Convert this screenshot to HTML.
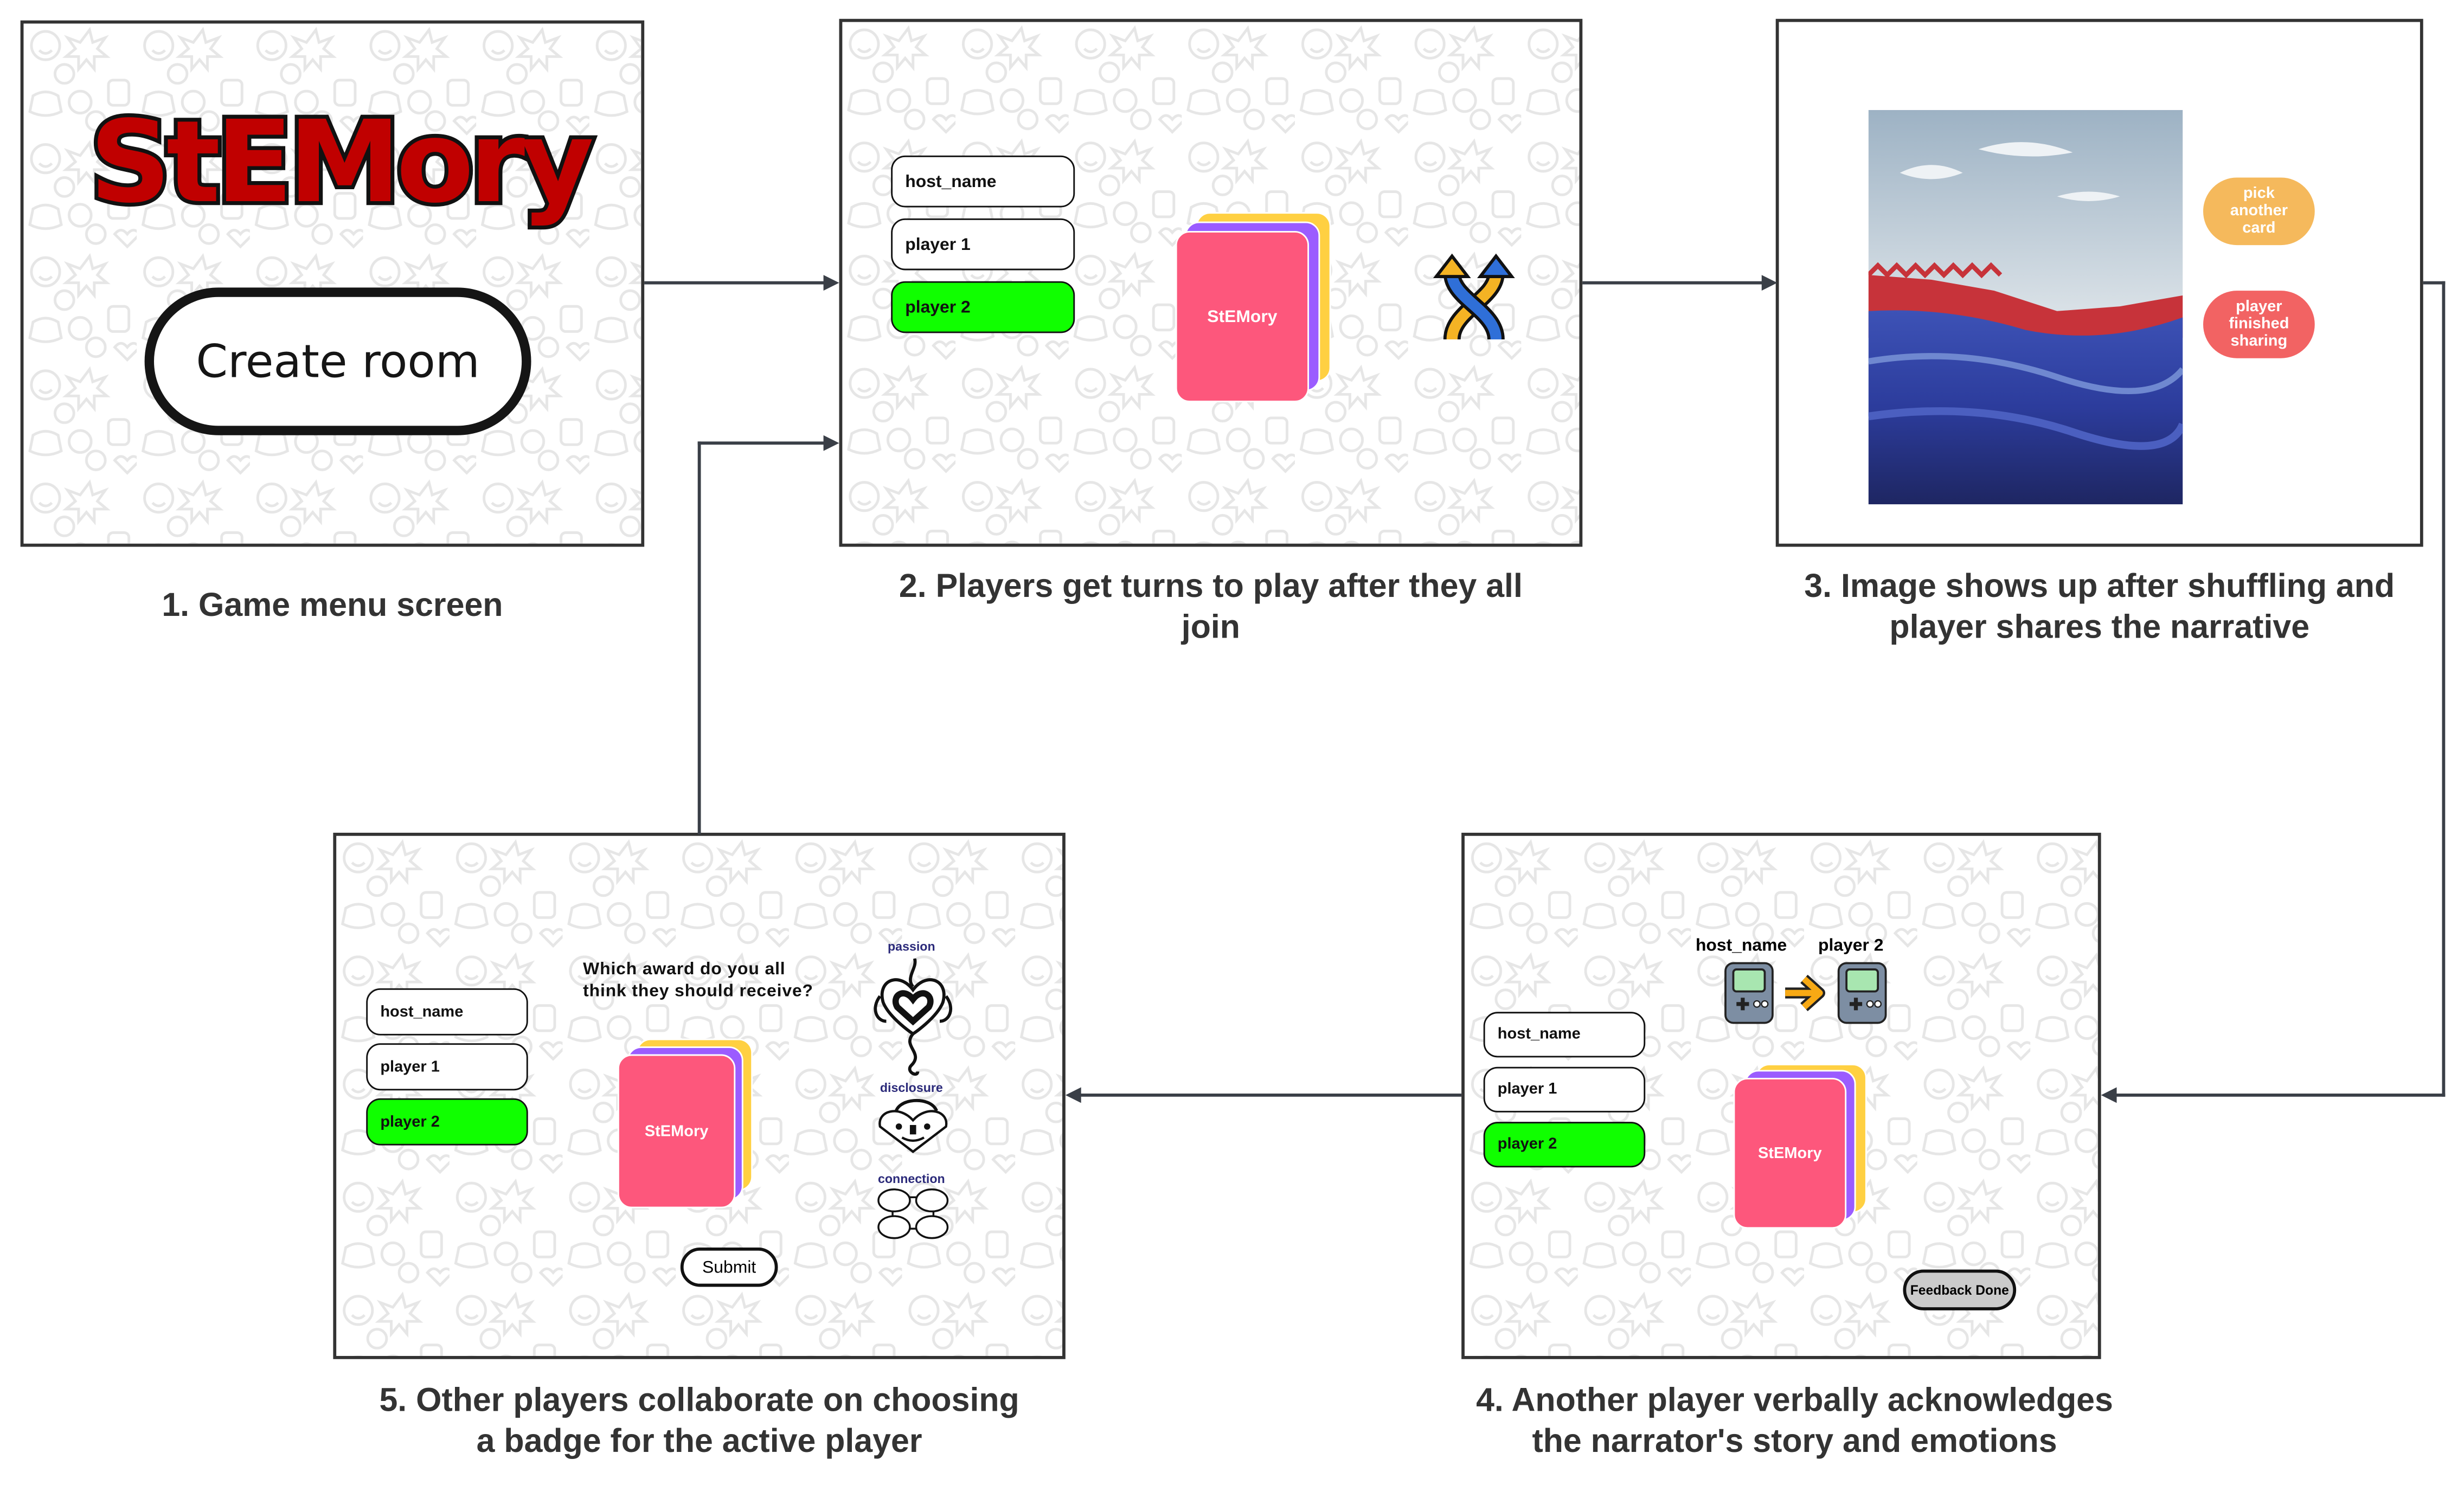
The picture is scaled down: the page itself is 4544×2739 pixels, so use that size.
<!DOCTYPE html>
<html><head><meta charset="utf-8"><style>
html,body{margin:0;padding:0;background:#fff;width:4544px;height:2738px;overflow:hidden}
#w{position:absolute;left:0;top:0;width:1568px;height:945px;transform:scale(2.898);transform-origin:0 0;font-family:"Liberation Sans",sans-serif}
.a{position:absolute}
.box{position:absolute;border:2px solid #333;box-sizing:border-box;overflow:hidden;background:#fff}
.pat{position:absolute;left:0;top:0;width:100%;height:100%}
.cap{position:absolute;text-align:center;font-weight:bold;color:#333;font-size:21px;line-height:26px}
.inp{position:absolute;border:1.5px solid #111;border-radius:9px;background:#fff;box-sizing:border-box;font-weight:bold;font-size:11px;padding-left:8px;display:flex;align-items:center;color:#111}
.g{background:#10ff00}
.card{position:absolute;border-radius:9px;border:1.5px solid #fff;box-sizing:border-box}
.ct{color:#fff;font-weight:bold;font-size:11px;display:flex;align-items:center;justify-content:center}
.ln{position:absolute;background:#3a3f47}
.pill{position:absolute;border-radius:22px;color:#fff;font-weight:bold;font-size:10px;line-height:11px;text-align:center;display:flex;align-items:center;justify-content:center}
</style></head><body><div id="w">
<svg width="0" height="0" style="position:absolute"><defs>
<pattern id="p" width="72" height="72" patternUnits="userSpaceOnUse">
<g fill="none" stroke="#e6e6e6" stroke-width="1.7">
<circle cx="14" cy="14" r="9"/><path d="M10 17q4 4 8 0"/>
<path d="M42 4l2 8 8-3-5 7 6 5-8 0 0 8-5-6-5 6 0-8-8 0 6-5-5-7 8 3z"/>
<rect x="54" y="36" width="13" height="16" rx="3"/>
<path d="M6 46q8-5 16 0l2 10q-10 5-20 0z"/>
<circle cx="36" cy="50" r="7"/><circle cx="46" cy="62" r="6"/>
<path d="M58 62q4-5 8 0q4-5 8 0l-8 8z"/>
<circle cx="26" cy="32" r="6"/>
</g></pattern></defs></svg>

<!-- Box 1 -->
<div class="box" style="left:13px;top:13px;width:397px;height:335px">
<svg class="pat"><rect width="100%" height="100%" fill="url(#p)"/></svg>
<div class="a" style="left:42px;top:48px;width:340px;font-size:72px;font-weight:900;font-family:'DejaVu Sans','Liberation Sans',sans-serif;color:#c00000;-webkit-text-stroke:5px #111;paint-order:stroke fill;letter-spacing:-3px;line-height:80px">StEMory</div>
<div class="a" style="left:77px;top:168px;width:246px;height:94px;border:6px solid #151515;border-radius:50px;background:#fff;box-sizing:border-box;display:flex;align-items:center;justify-content:center;font-size:29px;color:#151515;font-family:'DejaVu Sans',sans-serif">Create room</div>
</div>
<div class="cap" style="left:13px;top:373px;width:397px">1. Game menu screen</div>

<!-- Box 2 -->
<div class="box" style="left:534px;top:12px;width:473px;height:336px">
<svg class="pat"><rect width="100%" height="100%" fill="url(#p)"/></svg>
<div class="inp" style="left:31px;top:85px;width:117px;height:33px">host_name</div>
<div class="inp" style="left:31px;top:125px;width:117px;height:33px">player 1</div>
<div class="inp g" style="left:31px;top:165px;width:117px;height:33px">player 2</div>
<div class="card" style="left:225px;top:121px;width:86px;height:108px;background:#ffd042"></div>
<div class="card" style="left:218px;top:127px;width:86px;height:108px;background:#9b5cff"></div>
<div class="card ct" style="left:212px;top:133px;width:85px;height:109px;background:#fd577c">StEMory</div>
<svg class="a" style="left:376px;top:146px" width="54" height="60" viewBox="0 0 54 60">
<path d="M12 56 C12 38 40 30 40 14" stroke="#111" stroke-width="11" fill="none"/><path d="M12 56 C12 38 40 30 40 14" stroke="#f4b324" stroke-width="7" fill="none"/>
<path d="M40 56 C40 38 12 30 12 14" stroke="#111" stroke-width="11" fill="none"/><path d="M40 56 C40 38 12 30 12 14" stroke="#2f6fd8" stroke-width="7" fill="none"/>
<path d="M2 16 L12 3 L22 16z" fill="#f4b324" stroke="#111" stroke-width="2"/><path d="M30 16 L40 3 L50 16z" fill="#2f6fd8" stroke="#111" stroke-width="2"/>
</svg>
</div>
<div class="cap" style="left:534px;top:361px;width:473px">2. Players get turns to play after they all<br>join</div>

<!-- Box 3 -->
<div class="box" style="left:1130px;top:12px;width:412px;height:336px">
<svg class="a" style="left:57px;top:56px" width="200" height="251" viewBox="0 0 200 251">
<defs><linearGradient id="sky" x1="0" y1="0" x2="0" y2="1"><stop offset="0" stop-color="#9db2c4"/><stop offset=".5" stop-color="#d8e0e6"/><stop offset="1" stop-color="#e6eaee"/></linearGradient>
<linearGradient id="sea" x1="0" y1="0" x2="0" y2="1"><stop offset="0" stop-color="#3d52b6"/><stop offset=".5" stop-color="#2c3c9c"/><stop offset="1" stop-color="#1e2662"/></linearGradient></defs>
<rect width="200" height="251" fill="url(#sky)"/>
<path d="M20 40q20-10 40 0q-20 8-40 0zM70 25q30-10 60 2q-30 6-60-2zM120 55q20-6 40 0q-20 6-40 0z" fill="#eef2f5"/>
<path d="M0 105 L40 108 L80 115 L120 128 L160 125 L200 118 L200 145 L0 145z" fill="#c7333a"/>
<path d="M0 105 l6-6 6 6 6-6 6 6 6-6 6 6 6-6 6 6 6-6 6 6 6-6 6 6 6-6 6 6" stroke="#c7333a" stroke-width="3" fill="none"/>
<path d="M0 128 Q50 125 100 140 Q150 150 200 132 L200 251 L0 251z" fill="url(#sea)"/>
<path d="M0 160 Q60 150 120 170 T200 165" stroke="#6f88d0" stroke-width="4" fill="none"/>
<path d="M0 195 Q70 185 130 205 T200 200" stroke="#4b5fc0" stroke-width="5" fill="none"/>
</svg>
<div class="pill" style="left:270px;top:99px;width:71px;height:43px;background:#f5b95c">pick<br>another<br>card</div>
<div class="pill" style="left:270px;top:171px;width:71px;height:43px;background:#f26363">player<br>finished<br>sharing</div>
</div>
<div class="cap" style="left:1130px;top:361px;width:412px">3. Image shows up after shuffling and<br>player shares the narrative</div>

<!-- Box 5 -->
<div class="box" style="left:212px;top:530px;width:466px;height:335px">
<svg class="pat"><rect width="100%" height="100%" fill="url(#p)"/></svg>
<div class="inp" style="left:19px;top:97px;width:103px;height:30px;font-size:10px">host_name</div>
<div class="inp" style="left:19px;top:132px;width:103px;height:30px;font-size:10px">player 1</div>
<div class="inp g" style="left:19px;top:167px;width:103px;height:30px;font-size:10px">player 2</div>
<div class="a" style="left:157px;top:78px;font-size:11px;font-weight:bold;line-height:14px;color:#111;letter-spacing:0.3px">Which award do you all<br>think they should receive?</div>
<div class="card" style="left:191px;top:129px;width:74px;height:97px;background:#ffd042"></div>
<div class="card" style="left:185px;top:134px;width:74px;height:98px;background:#9b5cff"></div>
<div class="card ct" style="left:179px;top:139px;width:75px;height:98px;background:#fd577c;font-size:10px">StEMory</div>
<div class="a" style="left:219px;top:262px;width:62px;height:25px;border:2.5px solid #111;border-radius:14px;box-sizing:border-box;background:#fff;font-size:11px;display:flex;align-items:center;justify-content:center">Submit</div>
<div class="a" style="left:336px;top:66px;width:60px;text-align:center;font-size:8px;font-weight:bold;color:#2b2a7a">passion</div>
<svg class="a" style="left:340px;top:78px" width="54" height="78" viewBox="0 0 54 78">
<path d="M27 20 C18 8 4 14 8 28 C12 38 27 48 27 48 C27 48 42 38 46 28 C50 14 36 8 27 20z" fill="#fff" stroke="#111" stroke-width="2"/>
<path d="M27 26 C21 18 13 24 17 31 L27 40 L37 31 C41 24 33 18 27 26z" fill="none" stroke="#111" stroke-width="4"/>
<path d="M27 48 C20 56 34 60 26 68 C22 72 30 76 30 72" fill="none" stroke="#111" stroke-width="2"/>
<path d="M27 18 C22 12 30 6 28 0" fill="none" stroke="#111" stroke-width="2"/>
<path d="M6 24 C0 32 4 40 10 40 M48 24 C54 32 50 40 44 40" fill="none" stroke="#111" stroke-width="2"/></svg>
<div class="a" style="left:336px;top:156px;width:60px;text-align:center;font-size:8px;font-weight:bold;color:#2b2a7a">disclosure</div>
<svg class="a" style="left:344px;top:167px" width="46" height="36" viewBox="0 0 46 36">
<path d="M12 10 C12 0 34 -2 38 8" fill="none" stroke="#111" stroke-width="2"/>
<path d="M23 14 C14 4 0 8 2 18 L23 34 L44 18 C46 8 32 4 23 14z" fill="#fff" stroke="#111" stroke-width="1.5"/>
<rect x="21" y="17" width="4" height="6" fill="#111"/><circle cx="14" cy="18" r="2" fill="#111"/><circle cx="32" cy="18" r="2" fill="#111"/>
<path d="M16 25 q7 4 14 0" stroke="#111" fill="none" stroke-width="1.5"/></svg>
<div class="a" style="left:336px;top:214px;width:60px;text-align:center;font-size:8px;font-weight:bold;color:#2b2a7a">connection</div>
<svg class="a" style="left:344px;top:224px" width="46" height="34" viewBox="0 0 46 34">
<g fill="#fff" stroke="#111" stroke-width="1.2"><rect x="10" y="6" width="26" height="20" fill="none"/>
<ellipse cx="11" cy="8" rx="10" ry="7"/><ellipse cx="35" cy="8" rx="10" ry="7"/><ellipse cx="11" cy="25" rx="10" ry="7"/><ellipse cx="35" cy="25" rx="10" ry="7"/></g></svg>
</div>
<div class="cap" style="left:212px;top:879px;width:466px">5. Other players collaborate on choosing<br>a badge for the active player</div>

<!-- Box 4 -->
<div class="box" style="left:930px;top:530px;width:407px;height:335px">
<svg class="pat"><rect width="100%" height="100%" fill="url(#p)"/></svg>
<div class="inp" style="left:12px;top:112px;width:103px;height:29px;font-size:10px">host_name</div>
<div class="inp" style="left:12px;top:147px;width:103px;height:29px;font-size:10px">player 1</div>
<div class="inp g" style="left:12px;top:182px;width:103px;height:29px;font-size:10px">player 2</div>
<div class="a" style="left:147px;top:64px;font-size:11px;font-weight:bold">host_name</div>
<div class="a" style="left:225px;top:64px;font-size:11px;font-weight:bold">player 2</div>
<svg class="a" style="left:164px;top:79px" width="108" height="42" viewBox="0 0 108 42">
<g stroke="#222" stroke-width="1.3"><rect x="2" y="2" width="30" height="38" rx="5" fill="#7d8ea3"/><rect x="7" y="6" width="20" height="14" rx="2" fill="#a8e6b0"/>
<rect x="74" y="2" width="30" height="38" rx="5" fill="#7d8ea3"/><rect x="79" y="6" width="20" height="14" rx="2" fill="#a8e6b0"/></g>
<g fill="#fff" stroke="#222" stroke-width="0.8"><circle cx="22" cy="28" r="2"/><circle cx="27" cy="28" r="2"/><circle cx="94" cy="28" r="2"/><circle cx="99" cy="28" r="2"/></g>
<path d="M9 28h8M13 24v8M81 28h8M85 24v8" stroke="#222" stroke-width="2.5"/>
<path d="M40 21 L60 21 M52 12 L62 21 L52 30" stroke="#222" stroke-width="7" fill="none" stroke-linejoin="round"/>
<path d="M40 21 L60 21 M52 12 L62 21 L52 30" stroke="#f7a914" stroke-width="4" fill="none" stroke-linejoin="round"/></svg>
<div class="card" style="left:185px;top:145px;width:71px;height:95px;background:#ffd042"></div>
<div class="card" style="left:178px;top:149px;width:71px;height:96px;background:#9b5cff"></div>
<div class="card ct" style="left:171px;top:154px;width:72px;height:96px;background:#fd577c;font-size:10px">StEMory</div>
<div class="a" style="left:279px;top:276px;width:72px;height:26px;border:2.5px solid #111;border-radius:14px;box-sizing:border-box;background:#cbcbcb;font-size:8.5px;font-weight:bold;display:flex;align-items:center;justify-content:center">Feedback Done</div>
</div>
<div class="cap" style="left:930px;top:879px;width:424px">4. Another player verbally acknowledges<br>the narrator's story and emotions</div>

<!-- connectors -->
<div class="ln" style="left:410px;top:179px;width:116px;height:2px"></div>
<svg class="a" style="left:524px;top:175px" width="10" height="10"><path d="M0 0L10 5L0 10z" fill="#3a3f47"/></svg>
<div class="ln" style="left:1007px;top:179px;width:115px;height:2px"></div>
<svg class="a" style="left:1121px;top:175px" width="10" height="10"><path d="M0 0L10 5L0 10z" fill="#3a3f47"/></svg>
<div class="ln" style="left:1542px;top:179px;width:14px;height:2px"></div>
<div class="ln" style="left:1554px;top:179px;width:2px;height:519px"></div>
<div class="ln" style="left:1346px;top:696px;width:210px;height:2px"></div>
<svg class="a" style="left:1337px;top:692px" width="10" height="10"><path d="M10 0L0 5L10 10z" fill="#3a3f47"/></svg>
<div class="ln" style="left:687px;top:696px;width:243px;height:2px"></div>
<svg class="a" style="left:678px;top:692px" width="10" height="10"><path d="M10 0L0 5L10 10z" fill="#3a3f47"/></svg>
<div class="ln" style="left:444px;top:281px;width:2px;height:250px"></div>
<div class="ln" style="left:444px;top:281px;width:82px;height:2px"></div>
<svg class="a" style="left:524px;top:277px" width="10" height="10"><path d="M0 0L10 5L0 10z" fill="#3a3f47"/></svg>
</div></body></html>
